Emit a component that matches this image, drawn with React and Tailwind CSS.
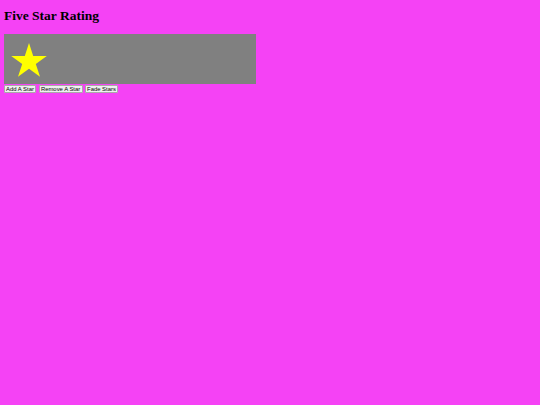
import React from "react";

function Star() {
  return (
    <svg width="36" height="34" viewBox="0 0 36 34" className="block">
      <polygon
        points="18,0 22.2,12.9 35.8,12.9 24.8,20.9 29,33.8 18,25.8 7,33.8 11.2,20.9 0.2,12.9 13.8,12.9"
        fill="#ffff00"
      />
    </svg>
  );
}

export default function App() {
  const btns = [
    ["Add A Star", "w-[32px]"],
    ["Remove A Star", "w-[44px]"],
    ["Fade Stars", "w-[32.5px]"],
  ];
  return (
    <div className="w-[540px] h-[405px] bg-[#f542f5] px-[4px] pt-[8px]">
      <h1
        className="text-[13.5px] font-bold leading-[16px] text-black"
        style={{ fontFamily: '"Liberation Serif", "Times New Roman", serif' }}
      >
        Five Star Rating
      </h1>
      <div className="mt-[10px] w-[252px] h-[50px] bg-[#808080] pl-[7px] pt-[9px]">
        <Star />
      </div>
      <div
        className="flex gap-[2.6px] mt-[0.5px]"
        style={{ fontFamily: '"Liberation Sans", Arial, sans-serif' }}
      >
        {btns.map(([t, w]) => (
          <button
            key={t}
            className={`${w} h-[8px] bg-[#efefef] border-[0.5px] border-[#aaa] text-[5.9px] leading-[6px] text-black rounded-[1px] flex items-center justify-center whitespace-nowrap`}
          >
            {t}
          </button>
        ))}
      </div>
    </div>
  );
}
